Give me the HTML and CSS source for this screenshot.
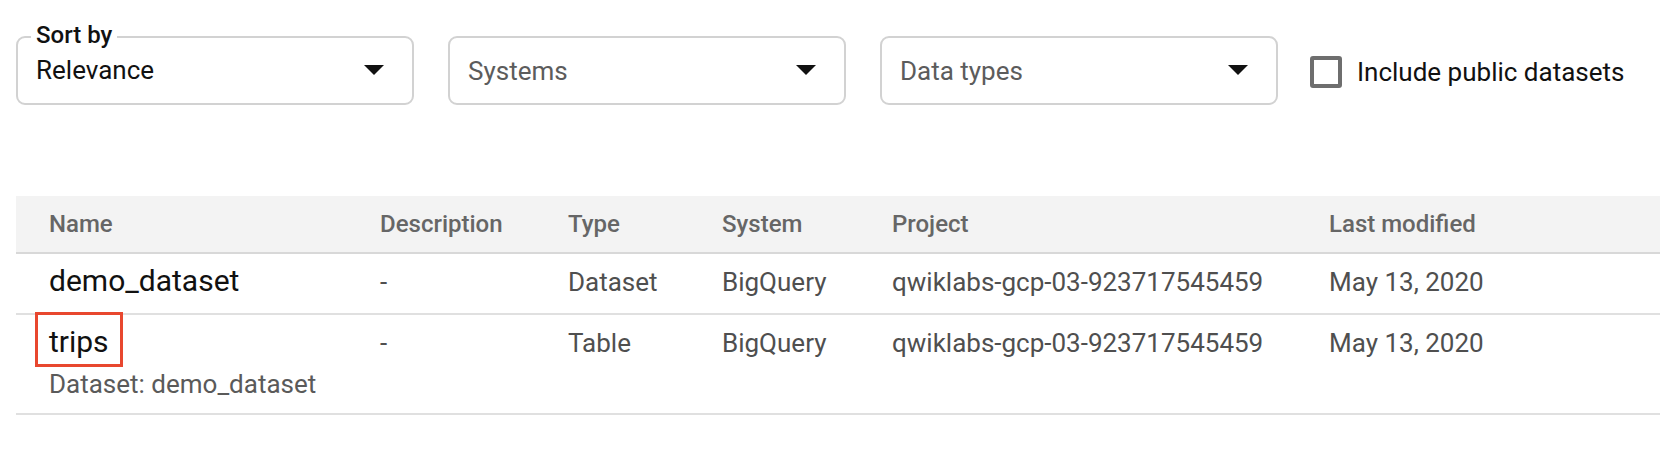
FILE: index.html
```html
<!DOCTYPE html>
<html lang="en">
<head>
<meta charset="utf-8">
<title>Search results</title>
<link rel="stylesheet" href="styles.css">
</head>
<body>
<div class="page">
  <div class="filters">
    <div class="select">
      <span class="select-label">Sort by</span>
      <span class="select-value">Relevance</span>
      <span class="caret"></span>
    </div>
    <div class="select">
      <span class="select-placeholder">Systems</span>
      <span class="caret"></span>
    </div>
    <div class="select">
      <span class="select-placeholder">Data types</span>
      <span class="caret"></span>
    </div>
    <label class="checkbox">
      <span class="checkbox-box"></span>
      <span class="checkbox-text">Include public datasets</span>
    </label>
  </div>

  <div class="table">
    <div class="row row-head">
      <div class="cell">Name</div>
      <div class="cell">Description</div>
      <div class="cell">Type</div>
      <div class="cell">System</div>
      <div class="cell">Project</div>
      <div class="cell">Last modified</div>
    </div>
    <div class="row">
      <div class="cell cell-name"><span class="name">demo_dataset</span></div>
      <div class="cell">-</div>
      <div class="cell">Dataset</div>
      <div class="cell">BigQuery</div>
      <div class="cell">qwiklabs-gcp-03-923717545459</div>
      <div class="cell">May 13, 2020</div>
    </div>
    <div class="row">
      <div class="cell cell-name">
        <span class="name name-marked">trips</span>
        <span class="sub">Dataset: demo_dataset</span>
      </div>
      <div class="cell">-</div>
      <div class="cell">Table</div>
      <div class="cell">BigQuery</div>
      <div class="cell">qwiklabs-gcp-03-923717545459</div>
      <div class="cell">May 13, 2020</div>
    </div>
  </div>
</div>
</body>
</html>
```

FILE: styles.css
```css
* { box-sizing: border-box; }

html, body {
  margin: 0;
  padding: 0;
  background: #ffffff;
}

body {
  font-family: Roboto, "Liberation Sans", Arial, sans-serif;
  font-size: 26px;
  color: #202124;
  width: 1660px;
  height: 462px;
  overflow: hidden;
}

.page {
  padding: 36px 0 0 16px;
}

/* ---------- filters ---------- */
.filters {
  display: flex;
  align-items: center;
}

.select {
  position: relative;
  width: 398px;
  height: 69px;
  border: 2px solid #d2d2d2;
  border-radius: 9px;
  display: flex;
  align-items: center;
  justify-content: space-between;
  padding: 0 28px 0 18px;
  margin-right: 34px;
}

.select:nth-child(3) { margin-right: 32px; }

.select-label {
  position: absolute;
  top: -20px;
  left: 13px;
  padding: 0 5px;
  background: #ffffff;
  font-size: 24px;
  font-weight: 500;
  line-height: 34px;
  color: #111111;
}

.select-value {
  font-size: 26px;
  line-height: 32px;
  color: #111111;
  margin-top: -2px;
}

.select-placeholder {
  font-size: 26px;
  line-height: 32px;
  color: #5c5c5c;
}

.caret {
  width: 0;
  height: 0;
  border-left: 10px solid transparent;
  border-right: 10px solid transparent;
  border-top: 10px solid #111111;
  margin-top: -2px;
}

.checkbox {
  display: flex;
  align-items: center;
  gap: 15px;
  margin-top: 2px;
}

.checkbox-box {
  width: 32px;
  height: 32px;
  border: 4px solid #6e6e6e;
  border-radius: 3px;
}

.checkbox-text {
  font-size: 26px;
  line-height: 32px;
  color: #111111;
}

/* ---------- table ---------- */
.table {
  margin-top: 91px;
}

.row {
  display: grid;
  grid-template-columns: 331px 188px 154px 170px 437px 1fr;
  align-items: baseline;
  padding: 9px 0 13px 33px;
  border-bottom: 2px solid #e0e0e0;
  font-size: 26px;
  line-height: 36px;
  color: #4f4f4f;
}

.row-head {
  background: #f3f3f3;
  padding: 14px 0 14px 33px;
  border-bottom-color: #d8d8d8;
  font-size: 24px;
  font-weight: 500;
  line-height: 28px;
  color: #666666;
}

.cell-name {
  display: flex;
  flex-direction: column;
}

.name {
  font-size: 30px;
  line-height: 36px;
  color: #111111;
  align-self: flex-start;
}

.name-marked {
  position: relative;
}

.name-marked::after {
  content: "";
  position: absolute;
  top: -12px;
  left: -14px;
  right: -14px;
  bottom: -7px;
  border: 3px solid #e8472f;
}

.sub {
  margin-top: 8px;
  font-size: 26px;
  line-height: 32px;
  color: #5a5a5a;
}
```
